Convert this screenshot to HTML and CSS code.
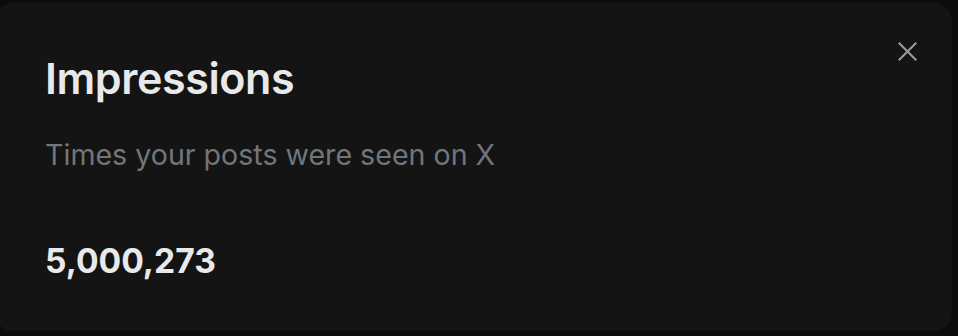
FILE: index.html
```html
<!DOCTYPE html>
<html lang="en">
<head>
    <meta charset="UTF-8">
    <title>Impressions</title>
    <link rel="stylesheet" href="styles.css">
</head>
<body>
<div class="card">
    <div class="head">
        <h1 class="title">Impressions</h1>
        <button class="close" aria-label="Close">
            <svg viewBox="0 0 24 24">
                <path d="M2 2 L22 22 M22 2 L2 22" stroke="currentColor" stroke-width="2.4" fill="none"/>
            </svg>
        </button>
    </div>
    <p class="desc">Times your posts were seen on X</p>
    <div class="value">5,000,273</div>
</div>
</body>
</html>
```

FILE: styles.css
```css
*{
    margin: 0;
    padding: 0;
    box-sizing: border-box;
}
html{
    font-family: Inter, "Noto Sans", sans-serif;
}
body{
    background: #0b0c0e;
    width: 958px;
    height: 336px;
    overflow: hidden;
    padding-top: 3px;
}
.card{
    margin-left: -5px;
    width: 957px;
    height: 328px;
    background: #141414;
    border-radius: 18px;
    padding: 46px 0 0 50px;
}
.head{
    display: flex;
    justify-content: space-between;
    align-items: flex-start;
}
.title{
    font-size: 43px;
    font-weight: 600;
    color: #e7e9ea;
    line-height: 58px;
    letter-spacing: -0.4px;
}
.close{
    background: none;
    border: none;
    color: #9b9b9b;
    width: 22px;
    height: 22px;
    margin: -9px 33px 0 0;
}
.close svg{
    display: block;
    width: 21px;
    height: 21px;
}
.desc{
    margin-top: 29px;
    font-size: 28.6px;
    line-height: 38px;
    color: #71767b;
}
.value{
    margin-top: 65px;
    font-size: 33.6px;
    font-weight: 700;
    line-height: 44px;
    color: #e7e9ea;
}
```
